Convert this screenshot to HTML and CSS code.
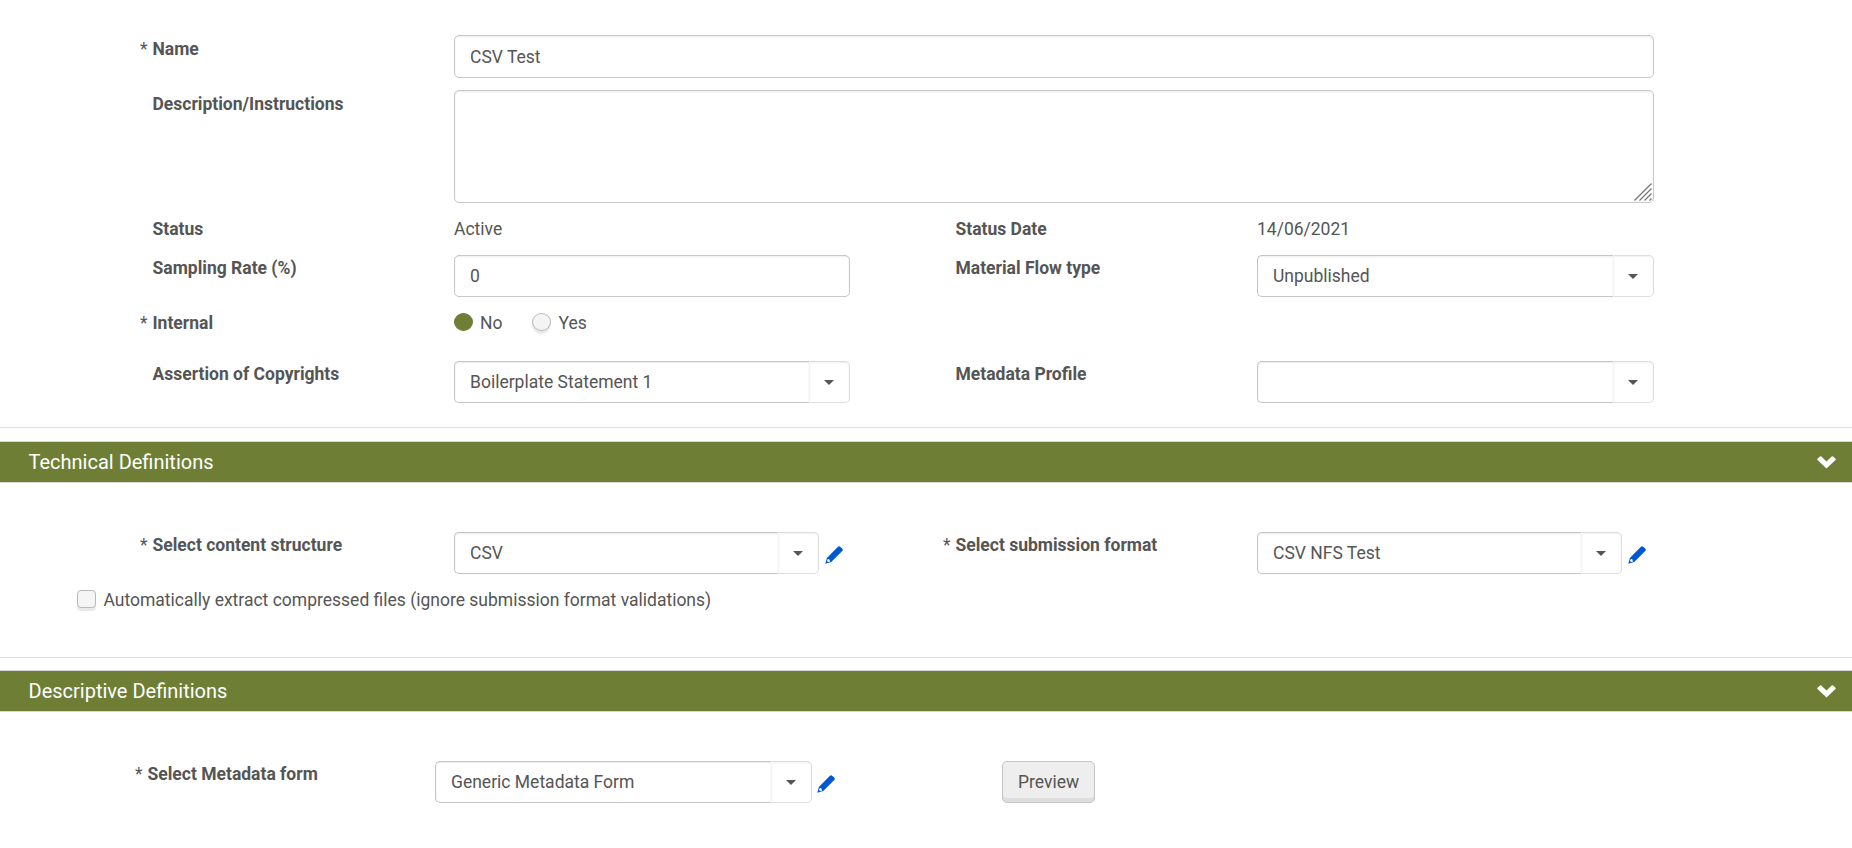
FILE: index.html
```html
<!DOCTYPE html>
<html lang="en">
<head>
    <meta charset="UTF-8">
    <meta name="viewport" content="width=device-width, initial-scale=1.0">
    <title>Material Flow</title>
    <link rel="stylesheet" href="styles.css">
</head>
<body>
    <svg class="symbols">
        <symbol id="pencil" viewBox="0 0 18 18">
            <path d="M12.7 1.1 Q14 -.4 15.4 .9 L17.2 2.6 Q18.5 4 17 5.3 L6.2 16.1 L.3 17.8 L1.9 11.9 Z" fill="#0058d2"/>
            <path d="M2.6 13.3 L4.2 13.1 L4.5 14.3 L5.3 15.6 L3.2 15.9 L2 15.1 Z" fill="#fff"/>
        </symbol>
        <symbol id="chevron" viewBox="0 0 19 13">
            <path d="M2.9 .6 Q3.6 0 4.3 .6 L9.5 5.4 L14.7 .6 Q15.4 0 16.1 .6 L18.5 2.8 Q19 3.4 18.5 4 L9.5 12.4 L.5 4 Q0 3.4 .5 2.8 Z" fill="#fff"/>
        </symbol>
    </svg>

    <form class="general">
        <div class="row row-name">
            <label><i>*</i>Name</label>
            <input class="field wide" type="text" value="CSV Test">
        </div>
        <div class="row row-description">
            <label><i></i>Description/Instructions</label>
            <div class="textarea-box">
                <textarea class="field"></textarea>
                <svg class="grip" viewBox="0 0 18 18"><path d="M.5 17.5 L17.5 .5 M5.5 17.5 L17.5 5.5 M10.5 17.5 L17.5 10.5 M15.5 17.5 L17.5 15.5" stroke="#777" stroke-width="1.3"/></svg>
            </div>
        </div>
        <div class="row row-status">
            <label><i></i>Status</label>
            <span>Active</span>
            <label><i></i>Status Date</label>
            <span>14/06/2021</span>
        </div>
        <div class="row row-sampling">
            <label><i></i>Sampling Rate (%)</label>
            <input class="field" type="text" value="0">
            <label><i></i>Material Flow type</label>
            <div class="select"><span>Unpublished</span><b></b></div>
        </div>
        <div class="row row-internal">
            <label><i>*</i>Internal</label>
            <div class="radios">
                <span class="radio checked"></span><span class="radio-text">No</span>
                <span class="radio"></span><span class="radio-text">Yes</span>
            </div>
        </div>
        <div class="row row-copyrights">
            <label><i></i>Assertion of Copyrights</label>
            <div class="select"><span>Boilerplate Statement 1</span><b></b></div>
            <label><i></i>Metadata Profile</label>
            <div class="select"><span></span><b></b></div>
        </div>
    </form>

    <section class="panel technical">
        <h2>Technical Definitions <svg class="chevron"><use href="#chevron"/></svg></h2>
        <div class="row">
            <label><i>*</i>Select content structure</label>
            <div class="with-edit">
                <div class="select"><span>CSV</span><b></b></div>
                <svg class="pencil"><use href="#pencil"/></svg>
            </div>
            <label><i>*</i>Select submission format</label>
            <div class="with-edit">
                <div class="select"><span>CSV NFS Test</span><b></b></div>
                <svg class="pencil"><use href="#pencil"/></svg>
            </div>
        </div>
        <div class="check-row">
            <span class="checkbox"></span>
            <span>Automatically extract compressed files (ignore submission format validations)</span>
        </div>
    </section>

    <section class="panel descriptive">
        <h2>Descriptive Definitions <svg class="chevron"><use href="#chevron"/></svg></h2>
        <div class="form-row">
            <label><i>*</i>Select Metadata form</label>
            <div class="with-edit">
                <div class="select"><span>Generic Metadata Form</span><b></b></div>
                <svg class="pencil"><use href="#pencil"/></svg>
            </div>
            <button type="button">Preview</button>
        </div>
    </section>
</body>
</html>
```
FILE: styles.css
```css
* {
    box-sizing: border-box;
}
body {
    margin: 0;
    font-family: Roboto, sans-serif;
    font-size: 17.5px;
    line-height: 25px;
    color: #555;
    background-color: #fff;
}
.symbols {
    display: none;
}
.general {
    height: 428px;
    padding-top: 35px;
    border-bottom: 1px solid #ddd;
}
.row {
    display: grid;
    grid-template-columns: 314px 396px 407px 397px;
    align-items: start;
    padding-left: 140px;
}
label {
    padding-top: 1px;
    font-weight: bold;
    white-space: nowrap;
}
label i {
    display: inline-block;
    width: 12.5px;
    font-style: normal;
    font-weight: normal;
}
.row label:nth-of-type(2) {
    padding-left: 93px;
}
.row-name {
    height: 55px;
}
.row-description {
    height: 125px;
}
.row-name label, .row-description label {
    padding-top: 2px;
}
.row-status {
    height: 40px;
    padding-top: 2px;
}
.row-status label {
    padding-top: 0;
}
.row-sampling {
    height: 55px;
}
.row-internal {
    height: 51px;
}
.field {
    width: 100%;
    height: 42px;
    padding: 0 15px;
    border: 1px solid #c8c8c8;
    border-radius: 5px;
    font: inherit;
    color: inherit;
    background-color: #fff;
    box-shadow: inset 0 1px 2px rgba(0, 0, 0, .08);
}
.wide {
    grid-column: 2 / 5;
    height: 43px;
}
.textarea-box {
    position: relative;
    grid-column: 2 / 5;
}
textarea.field {
    display: block;
    height: 113px;
    resize: none;
}
.grip {
    position: absolute;
    right: 2px;
    bottom: 2px;
    width: 18px;
    height: 18px;
}
.select {
    display: flex;
    width: 100%;
    height: 42px;
}
.select span {
    flex: 1;
    padding: 8px 15px 6px;
    border: 1px solid #c4c4c4;
    border-right: 0;
    border-radius: 5px 0 0 5px;
    box-shadow: inset 0 1px 2px rgba(0, 0, 0, .08);
}
.select b {
    display: flex;
    justify-content: center;
    align-items: center;
    width: 41px;
    padding-right: 2px;
    border: 1px solid #ddd;
    border-left-color: #f3f3f3;
    border-radius: 0 5px 5px 0;
    box-shadow: inset 0 1px 2px rgba(0, 0, 0, .06);
}
.select b::after {
    content: "";
    border: 5px solid transparent;
    border-top-color: #555;
    border-bottom: 0;
}
.radios {
    display: flex;
    padding-top: 1px;
}
.radio {
    width: 19px;
    height: 18px;
    margin: 2px 7px 0 0;
    border: 1px solid #b8b8b8;
    border-radius: 50%;
    background-color: #f4f4f4;
    box-shadow: 0 3px 0 #eaeaea;
}
.radio.checked {
    border-color: #6e7f35;
    background-color: #6e7f35;
    box-shadow: none;
}
.radio-text {
    margin-right: 30px;
}
.panel {
    padding-top: 13px;
}
.panel h2 {
    display: flex;
    justify-content: space-between;
    align-items: center;
    height: 42px;
    margin: 0;
    padding: 0 16px 0 28.5px;
    border: 1px solid #d8d8d8;
    border-width: 1px 0;
    font-size: 20px;
    font-weight: normal;
    color: #fff;
    background-color: #6e7f35;
}
.chevron {
    width: 19px;
    height: 13px;
}
.technical {
    height: 230px;
    border-bottom: 1px solid #ddd;
}
.technical .row {
    height: 105px;
    padding-top: 49px;
}
.with-edit {
    display: flex;
}
.with-edit .select {
    width: 365px;
}
.pencil {
    width: 18px;
    height: 18px;
    margin: 14px 0 0 6px;
}
.check-row {
    display: flex;
    padding-left: 77px;
}
.checkbox {
    width: 19px;
    height: 18px;
    margin: 2px 7.5px 0 0;
    border: 1px solid #b8b8b8;
    border-radius: 4px;
    background-color: #f5f5f5;
    box-shadow: 0 3px 0 #eaeaea;
}
.descriptive {
    padding-top: 12px;
}
.form-row {
    display: flex;
    align-items: flex-start;
    padding: 49px 0 0 135px;
}
.form-row label {
    width: 300px;
}
.form-row .with-edit {
    width: 567px;
}
.form-row .select {
    width: 377px;
}
.form-row .pencil {
    margin-left: 5px;
}
button {
    width: 93px;
    height: 42px;
    padding: 0;
    border: 1px solid #c4c4c4;
    border-radius: 5px;
    font: inherit;
    color: inherit;
    background-color: #eee;
    box-shadow: inset 0 -4px 0 #ddd;
}
```
